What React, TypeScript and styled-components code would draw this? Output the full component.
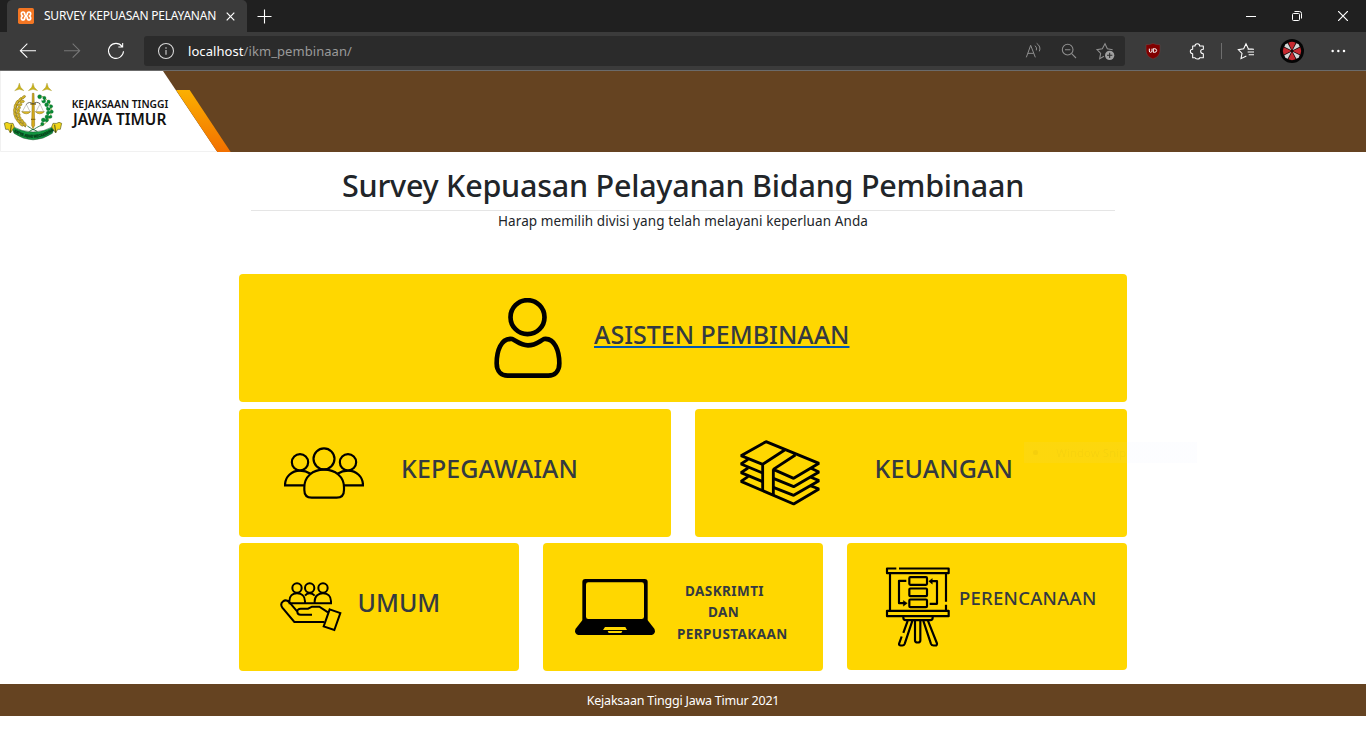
import React from "react";
import styled, { createGlobalStyle } from "styled-components";

const Global = createGlobalStyle`
  * { box-sizing: border-box; }
  html, body { margin: 0; padding: 0; background: #fff; overflow: hidden; }
  body { font-family: "Noto Sans", "Open Sans", sans-serif; color: #212529; }
  svg { display: block; flex: none; }
`;

const gold = "#ffd700";
const brown = "#654321";

const Window = styled.div`
  position: relative;
  width: 1366px;
  height: 738px;
  overflow: hidden;
  background: #fff;
`;

/* ---------- browser chrome ---------- */
const TitleBar = styled.div`
  display: flex;
  align-items: stretch;
  height: 32px;
  padding-left: 7px;
  background: #202020;
`;

const Tab = styled.div`
  display: flex;
  align-items: center;
  width: 240px;
  padding: 0 11px;
  border-radius: 5px 5px 0 0;
  background: #3b3b3b;
`;

const TabTitle = styled.span`
  width: 174px;
  margin: 0 8px 0 10px;
  color: #fff;
  font-size: 12px;
  letter-spacing: -0.22px;
  line-height: 16px;
  white-space: nowrap;
`;

const NewTab = styled.div`
  display: flex;
  align-items: center;
  margin-left: 10px;
`;

const WindowControls = styled.div`
  display: flex;
  margin-left: auto;
`;

const ControlButton = styled.div`
  display: flex;
  align-items: center;
  justify-content: center;
  width: 46px;
`;

const Toolbar = styled.div`
  display: flex;
  align-items: center;
  height: 39px;
  padding: 0 16px 1px;
  border-bottom: 1px solid #6b6b6b;
  background: #3b3b3b;
`;

const AddressBar = styled.div`
  display: flex;
  align-items: center;
  width: 981px;
  height: 30px;
  margin-left: 16px;
  padding: 0 8px 0 10px;
  border-radius: 3px;
  background: #2b2b2b;
`;

const Url = styled.span`
  margin: 0 auto 0 10px;
  color: #9a9a9a;
  font-size: 13px;
  letter-spacing: 0.07px;
  line-height: 18px;
  white-space: nowrap;
`;

const Host = styled.span`
  color: #fff;
`;

const Slot = styled.div<{ $gap?: number }>`
  flex: none;
  margin-left: ${(p) => p.$gap ?? 0}px;
`;

const Separator = styled.div`
  width: 1px;
  height: 16px;
  margin-left: 12px;
  background: #6e6e6e;
`;

type GlyphProps = { cx: number; color?: string; gap?: number; children: React.ReactNode };

const Glyph = ({ cx, color = "#fff", gap, children }: GlyphProps) => (
  <Slot $gap={gap}>
    <svg width="24" height="24" viewBox={`${cx - 36} 117 72 72`} fill="none" stroke={color} strokeWidth="3.2">
      {children}
    </svg>
  </Slot>
);

/* ---------- page ---------- */
const Banner = styled.header`
  height: 81px;
  background: ${brown};
`;

const Intro = styled.section`
  width: 864px;
  margin: 0 auto;
  padding-top: 13px;
  text-align: center;
`;

const Heading = styled.h1`
  height: 46px;
  margin: 0;
  border-bottom: 1px solid #e5e5e5;
  font-size: 30.5px;
  font-weight: 500;
  letter-spacing: -0.24px;
  line-height: 40px;
  white-space: nowrap;
`;

const Lead = styled.p`
  margin: 0;
  font-size: 13.5px;
  letter-spacing: 0.1px;
  line-height: 20px;
`;

const Divisions = styled.main`
  width: 888px;
  margin: 43px auto 0;
`;

const Row = styled.div<{ $columns: number; $space: number }>`
  display: grid;
  grid-template-columns: repeat(${(p) => p.$columns}, 1fr);
  column-gap: 24px;
  margin-bottom: ${(p) => p.$space}px;
`;

const Card = styled.a<{ $inset: number; $height?: number }>`
  display: flex;
  align-items: center;
  height: ${(p) => p.$height ?? 128}px;
  padding-left: ${(p) => p.$inset}px;
  border-radius: 4px;
  background: ${gold};
  color: #343a40;
  text-decoration: none;
`;

const Label = styled.span<{ $gap: number; $size?: number; $spacing?: number; $lift?: number }>`
  margin-left: ${(p) => p.$gap}px;
  padding-bottom: ${(p) => p.$lift ?? 10}px;
  font-size: ${(p) => p.$size ?? 25}px;
  font-weight: 500;
  letter-spacing: ${(p) => p.$spacing ?? 0}px;
  line-height: 34px;
  white-space: nowrap;
`;

const LinkText = styled.span`
  text-decoration: underline;
  text-decoration-color: #0056b3;
  text-decoration-thickness: 2px;
  text-underline-offset: 2px;
  text-decoration-skip-ink: none;
`;

const SmallLabel = styled.span`
  display: flex;
  flex-direction: column;
  margin-left: 22px;
  padding-top: 12px;
  font-size: 13.5px;
  font-weight: 700;
  letter-spacing: 0.42px;
  line-height: 21.5px;
`;

const Line = styled.span<{ $indent?: number }>`
  padding-left: ${(p) => p.$indent ?? 0}px;
  white-space: nowrap;
`;

const Footer = styled.footer`
  height: 32px;
  background: ${brown};
  color: #fff;
  font-size: 12.5px;
  letter-spacing: -0.22px;
  line-height: 33px;
  text-align: center;
`;

const SnipGhost = styled.div`
  position: absolute;
  left: 1024px;
  top: 442px;
  display: flex;
  align-items: center;
  width: 173px;
  height: 21px;
  padding-left: 9px;
  background: linear-gradient(90deg, rgba(245, 215, 60, 0.22) 103px, rgba(235, 240, 255, 0.14) 103px);
  color: rgba(120, 110, 40, 0.06);
  font-size: 11.5px;
  white-space: nowrap;
`;

const GhostDot = styled.span`
  width: 5px;
  height: 5px;
  margin-right: 18px;
  border-radius: 50%;
  background: rgba(120, 80, 0, 0.06);
`;

/* ---------- drawings ---------- */
const star = (x: number) => `M${x} 45L${x + 4} 58L${x + 14} 68L${x} 64L${x - 14} 68L${x - 4} 58Z`;
const wheat: [number, number, number][] = [
  [70, 88, 50], [60, 95, 40], [66, 101, 80], [51, 104, 25], [59, 111, 70], [46, 115, 10], [55, 122, 55], [44, 127, 0],
  [54, 132, 35], [45, 139, -15], [56, 143, 20], [49, 150, -30], [60, 153, 0], [56, 160, -45], [67, 161, -15], [64, 169, -55], [74, 168, -30],
];
const cotton: [number, number][] = [
  [119, 86], [133, 90], [131, 99], [146, 101], [140, 110], [153, 115], [145, 122], [155, 131], [145, 135], [151, 146], [141, 147], [140, 157], [130, 156], [127, 168],
];

const AgencyLogo = () => (
  <svg width="240" height="81" viewBox="0 9 720 243">
    <defs>
      <linearGradient id="stripe" x1="0" y1="0" x2="0" y2="1">
        <stop offset="0" stopColor="#fbb000" />
        <stop offset="1" stopColor="#f27000" />
      </linearGradient>
      <path id="ribbon" d="M38 189Q99 230 160 189" />
    </defs>
    <path d="M0 9H489L652 252H0Z" fill="#fff" />
    <path d="M1.5 9V250.5H651" fill="none" stroke="#f1f1f1" strokeWidth="3" />
    <path d="M528 66H569L692 252H652Z" fill="url(#stripe)" />
    {[58, 99, 141].map((x) => (
      <path key={x} d={star(x)} fill="#c9b31c" stroke="#a39530" strokeWidth="1" />
    ))}
    <path d="M76 86C38 104 36 156 78 177" fill="none" stroke="#8a7416" strokeWidth="3" />
    {wheat.map(([x, y, a]) => (
      <ellipse key={`${x}-${y}`} cx={x} cy={y} rx="3.6" ry="7.5" transform={`rotate(${a} ${x} ${y})`} fill="#d6b625" stroke="#8c7720" strokeWidth="1.6" />
    ))}
    <path d="M126 85C165 104 162 156 122 175" fill="none" stroke="#a9b64c" strokeWidth="3" />
    {cotton.map(([x, y], i) => (
      <circle key={`${x}-${y}`} cx={x} cy={y} r={i % 2 ? 5 : 6} fill="#078b34" stroke="#056125" strokeWidth="1" />
    ))}
    <circle cx="128" cy="95" r="2.5" fill="#fff" />
    <circle cx="147" cy="117" r="2.5" fill="#fff" />
    <circle cx="149" cy="140" r="2.5" fill="#fff" />
    <path d="M97 76L102 76L104 172L99 183L95 172Z" fill="#d6ab18" stroke="#806813" strokeWidth="1.5" />
    <path d="M91 108H108M93 154H106" stroke="#8a6d10" strokeWidth="4" />
    <path d="M78 110Q88 98 99 108Q110 98 121 108" fill="none" stroke="#4d4d44" strokeWidth="2.5" />
    <path d="M79 109L67 131M79 109L90 131M120 108L108 131M120 108L131 131" stroke="#8a8a82" strokeWidth="1.4" />
    <path d="M65 131H92Q79 144 65 131ZM106 131H133Q119 144 106 131Z" fill="#e5bd22" stroke="#80701c" strokeWidth="1.5" />
    <path d="M82 174Q94 181 99 186Q108 179 123 172M88 190L99 184L112 190" fill="none" stroke="#176b32" strokeWidth="2.5" />
    <path d="M34 174Q99 210 164 174L157 196Q99 235 42 196Z" fill="#129440" stroke="#0a4b21" strokeWidth="1.5" />
    <path d="M13 166L21 163Q28 168 39 166L43 177L31 195L25 184L17 184Z" fill="#f0d51a" stroke="#5f601d" strokeWidth="2" />
    <path d="M185 166L177 163Q170 168 159 166L155 177L167 195L173 184L181 184Z" fill="#f0d51a" stroke="#5f601d" strokeWidth="2" />
    <path d="M34 170L31 194M164 170L167 194" stroke="#4c4f18" strokeWidth="3" />
    <text fontSize="12" fontWeight="800" fill="#053d18" stroke="#053d18" strokeWidth="0.8">
      <textPath href="#ribbon" startOffset="4" textLength="128" lengthAdjust="spacingAndGlyphs">SATYA ADHI WICAKSANA</textPath>
    </text>
    <g fontWeight="600" fill="#111">
      <text x="215" y="121" fontSize="32.500" textLength="290" lengthAdjust="spacingAndGlyphs">KEJAKSAAN TINGGI</text>
      <text x="219" y="171" fontSize="46" textLength="280" lengthAdjust="spacingAndGlyphs">JAWA TIMUR</text>
    </g>
  </svg>
);

const PersonIcon = () => (
  <svg width="80" height="80" viewBox="744 414 240 240" fill="none" stroke="#000" strokeWidth="14">
    <circle cx="862.5" cy="471.5" r="51" />
    <path d="M817 537C782 533 770 575 770 610C770 635 785 647 803 647H925C943 647 958 635 958 610C958 575 945 533 912 537C895 546 885 556 864 556C843 556 834 546 817 537Z" strokeLinejoin="round" />
  </svg>
);

const StaffIcon = () => (
  <svg width="80" height="80" viewBox="162 99 240 240" fill="none" stroke="#000" strokeWidth="6.500">
    <circle cx="282" cy="176.500" r="31.500" />
    <circle cx="210" cy="187" r="24.500" />
    <circle cx="354" cy="187" r="24.500" />
    <path d="M223 262C223 230 248 209 282 209C316 209 342 230 342 262V270Q342 293 320 293H245Q223 293 223 270Z" />
    <path d="M222 256H165C165 230 185 212 210 212C222 212 233 216 243 222M342 256H399C399 230 379 212 354 212C342 212 331 216 321 222" />
  </svg>
);

const MoneyIcon = () => (
  <svg width="80" height="80" viewBox="150 99 240 240" fill="none" stroke="#000" strokeWidth="8.500" strokeLinejoin="bevel">
    <path d="M218 193L153 167L228 125L387 190L311 235L250 208L316 165M218 270V193L284 150M250 208V285" />
    <path d="M174 178L153 192L218 219M174 204L153 218L218 245M174 230L153 244L311 312L387 267L361 257" />
    <path d="M250 235L311 260L387 216L363 205M250 262L311 286L387 242L361 231" />
  </svg>
);

const CareIcon = () => (
  <svg width="62" height="62" viewBox="150 108 186 186" fill="none" stroke="#000" strokeWidth="6">
    <circle cx="201" cy="144" r="14" />
    <circle cx="239" cy="144" r="14" />
    <circle cx="279" cy="144" r="14" />
    <path d="M178 190V184C178 168 188 160 201 160C214 160 225 168 225 184V190M225 167Q230 160 239 160Q248 160 254 167M254 190V184C254 168 266 160 279 160C292 160 303 168 303 184V190H176" />
    <path d="M177 186C165 174 147 188 157 203L193 246H283M174 182L202 215M246 224H212C199 224 198 206 212 206H234L246 200H268L294 217" />
    <path d="M299 208L331 219L313 270L281 259Z" />
  </svg>
);

const LaptopIcon = () => (
  <svg width="80" height="80" viewBox="105 81 240 240">
    <rect x="127" y="117" width="196" height="134" rx="9" />
    <path d="M127 241H323L343 266Q349 280 335 285H115Q101 280 107 266Z" />
    <rect x="138" y="127" width="174" height="110" rx="7" fill={gold} />
    <path d="M195 261H256L261 270H189ZM203 273H247L244 279H206Z" fill={gold} />
  </svg>
);

const PlanIcon = () => (
  <svg width="80" height="80" viewBox="114 79.500 240 240" fill="none" stroke="#000" strokeWidth="6.500" strokeLinejoin="round">
    <path d="M169 84H141V98H326V84H177M150 98V211M318 98V184M318 193V211M141 211H326V227H141Z" />
    <path d="M190 227V232Q190 239 197 239H271Q278 239 278 232V227" />
    <rect x="208" y="110" width="53" height="23" rx="3" />
    <rect x="208" y="144" width="53" height="23" rx="3" />
    <rect x="208" y="177" width="53" height="23" rx="3" />
    <path d="M199 121H177V188H193M269 190H291V122H274" />
    <path d="M190 180L202 188L190 197ZM277 114L266 122L277 131Z" fill="#000" strokeWidth="1" />
    <path d="M225 239V300Q225 306 233 306Q241 306 241 300V239M203 241L190 277M185 288L177 310Q177 315 182 315H187Q192 315 194 310L217 241M264 241L291 309Q291 315 287 315H281Q275 315 273 310L250 241" />
  </svg>
);

const TitleRow = () => (
  <TitleBar>
    <Tab>
      <svg width="16" height="16" viewBox="0 0 48 48">
        <rect width="48" height="48" rx="5" fill="#f37623" />
        <g fill="none" stroke="#fff" strokeWidth="5" strokeLinecap="round" strokeLinejoin="round">
          <path d="M20 18Q20 12 15 12Q10 12 10 18Q10 22 14 24Q10 26 10 30Q10 36 15 36Q20 36 20 30" />
          <path d="M28 18Q28 12 33 12Q38 12 38 18Q38 22 34 24Q38 26 38 30Q38 36 33 36Q28 36 28 30" />
          <path d="M20 18Q24 29 28 18M20 30Q24 19 28 30" />
        </g>
      </svg>
      <TabTitle>SURVEY KEPUASAN PELAYANAN</TabTitle>
      <svg width="9" height="9" viewBox="0 0 9 9" stroke="#fff" strokeWidth="1.200">
        <path d="M0.700 0.700L8.300 8.300M8.300 0.700L0.700 8.300" />
      </svg>
    </Tab>
    <NewTab>
      <svg width="15" height="15" viewBox="0 0 15 15" stroke="#fff" strokeWidth="1.100">
        <path d="M0.500 7.500H14.500M7.500 0.500V14.500" />
      </svg>
    </NewTab>
    <WindowControls>
      <ControlButton>
        <svg width="10" height="10" viewBox="0 0 10 10"><path d="M0 5.500H10" stroke="#fff" /></svg>
      </ControlButton>
      <ControlButton>
        <svg width="10" height="10" viewBox="0 0 10 10" fill="none" stroke="#fff">
          <rect x="0.500" y="2.500" width="7" height="7" rx="1" />
          <path d="M2.500 0.500H7.500Q9.500 0.500 9.500 2.500V7.500" />
        </svg>
      </ControlButton>
      <ControlButton>
        <svg width="10" height="10" viewBox="0 0 10 10" stroke="#fff" strokeWidth="1.200"><path d="M0 0L10 10M10 0L0 10" /></svg>
      </ControlButton>
    </WindowControls>
  </TitleBar>
);

const ToolRow = () => (
  <Toolbar>
    <Glyph cx={84}><path d="M108 152H61M82 131L61 152L82 173" /></Glyph>
    <Glyph cx={216} gap={20} color="#777"><path d="M192 152H239M218 131L239 152L218 173" /></Glyph>
    <Glyph cx={348} gap={20}>
      <path d="M366 139A22.500 22.500 0 1 0 370.500 154M368 129V141H355" />
    </Glyph>
    <AddressBar>
      <Glyph cx={498} color="#d8d8d8">
        <circle cx="498" cy="153" r="22.500" />
        <path d="M498 150V164M498 142V146" />
      </Glyph>
      <Url><Host>localhost</Host>/ikm_pembinaan/</Url>
      <Glyph cx={102} color="#8f8f8f">
        <path d="M79 172L92 136L106 172M84 160H101M105 137Q112 143 109 151M110 130Q124 140 118 154" strokeWidth="3" />
      </Glyph>
      <Glyph cx={207} gap={11} color="#8f8f8f">
        <circle cx="203" cy="149" r="16" />
        <path d="M215 161L228 174M195 149H211" />
      </Glyph>
      <Glyph cx={315} gap={12} color="#8f8f8f">
        <path d="M312 169L299 176L302 160L291 149L307 146L315 131L322 146L338 149" />
        <circle cx="329" cy="166" r="14" fill="#a0a0a0" stroke="none" />
        <path d="M321 166H337M329 158V174" stroke="#2b2b2b" />
      </Glyph>
    </AddressBar>
    <Glyph cx={459} gap={16}>
      <path d="M459 130Q468 135 480 134V152Q480 169 459 177Q438 169 438 152V134Q450 135 459 130Z" fill="#800000" stroke="#6b4a4a" strokeWidth="1.500" />
      <path d="M448 146V153Q448 157 452 157Q456 157 456 153V146M460 146V157H463Q470 157 470 151.500Q470 146 463 146H460" strokeWidth="3" />
    </Glyph>
    <Glyph cx={591} gap={20}>
      <path d="M578 138H585Q585 131 592 131Q599 131 599 138H610V148Q602 148 602 154Q602 161 610 161V173H599Q599 177 592 177Q586 177 585 173H578V161Q571 161 571 154Q571 148 578 148Z" strokeLinejoin="round" />
    </Glyph>
    <Separator />
    <Glyph cx={738} gap={12}>
      <path d="M739 168L723 176L726 160L715 149L731 146L738 131L745 146L758 147M743 148H762M743 156H762M746 164H762" />
    </Glyph>
    <Glyph cx={876} gap={22}>
      <circle cx="876" cy="153" r="36" fill="#050505" stroke="none" />
      {[0, 90, 180, 270].map((a) => (
        <g key={a} transform={`rotate(${a} 876 153)`} stroke="none">
          <path d="M876 151L865 128Q876 123 887 128Z" fill="#c62a30" />
          <path d="M878 151L889 130L896 133L899 140Z" fill="#d6d6d6" />
        </g>
      ))}
    </Glyph>
    <Glyph cx={1014} gap={22}>
      <g fill="#fff" stroke="none">
        <circle cx="998" cy="153" r="3.700" />
        <circle cx="1015" cy="153" r="3.700" />
        <circle cx="1032" cy="153" r="3.700" />
      </g>
    </Glyph>
  </Toolbar>
);

export default function App() {
  return (
    <Window>
      <Global />
      <TitleRow />
      <ToolRow />
      <Banner><AgencyLogo /></Banner>
      <Intro>
        <Heading>Survey Kepuasan Pelayanan Bidang Pembinaan</Heading>
        <Lead>Harap memilih divisi yang telah melayani keperluan Anda</Lead>
      </Intro>
      <Divisions>
        <Row $columns={1} $space={7}>
          <Card $inset={249}>
            <PersonIcon />
            <Label $gap={26} $lift={8}><LinkText>ASISTEN PEMBINAAN</LinkText></Label>
          </Card>
        </Row>
        <Row $columns={2} $space={6}>
          <Card $inset={45}>
            <StaffIcon />
            <Label $gap={37} $spacing={0.1}>KEPEGAWAIAN</Label>
          </Card>
          <Card $inset={45}>
            <MoneyIcon />
            <Label $gap={54.5} $spacing={0.1}>KEUANGAN</Label>
          </Card>
        </Row>
        <Row $columns={3} $space={13}>
          <Card $inset={41}>
            <CareIcon />
            <Label $gap={15.5}>UMUM</Label>
          </Card>
          <Card $inset={32}>
            <LaptopIcon />
            <SmallLabel>
              <Line $indent={8}>DASKRIMTI</Line>
              <Line $indent={31}>DAN</Line>
              <Line>PERPUSTAKAAN</Line>
            </SmallLabel>
          </Card>
          <Card $inset={31} $height={127}>
            <PlanIcon />
            <Label $gap={1} $size={18.5} $spacing={0.25} $lift={18}>PERENCANAAN</Label>
          </Card>
        </Row>
      </Divisions>
      <Footer>Kejaksaan Tinggi Jawa Timur 2021</Footer>
      <SnipGhost>
        <GhostDot />
        Window Snip
      </SnipGhost>
    </Window>
  );
}
